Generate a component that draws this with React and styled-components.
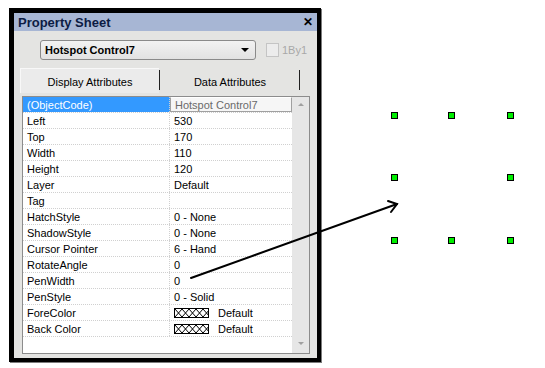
import React from 'react'
import styled, { createGlobalStyle } from 'styled-components'

const rows = [
  ['(ObjectCode)', 'Hotspot Control7'],
  ['Left', '530'],
  ['Top', '170'],
  ['Width', '110'],
  ['Height', '120'],
  ['Layer', 'Default'],
  ['Tag', ''],
  ['HatchStyle', '0 - None'],
  ['ShadowStyle', '0 - None'],
  ['Cursor Pointer', '6 - Hand'],
  ['RotateAngle', '0'],
  ['PenWidth', '0'],
  ['PenStyle', '0 - Solid'],
  ['ForeColor', 'Default', true],
  ['Back Color', 'Default', true],
]

const handles = [
  [394, 115], [451, 115], [510, 115],
  [394, 177], [510, 177],
  [394, 240], [451, 240], [510, 240],
]

function Swatch() {
  return (
    <svg width="35" height="10" viewBox="0 0 35 10">
      <rect x="0.5" y="0.5" width="34" height="9" fill="#fff" stroke="#000" />
      {[0, 1, 2, 3, 4].map(i => (
        <g key={i} stroke="#000" strokeWidth="1">
          <line x1={1 + i * 7} y1="1" x2={8 + i * 7} y2="9" />
          <line x1={8 + i * 7} y1="1" x2={1 + i * 7} y2="9" />
        </g>
      ))}
    </svg>
  )
}

function App() {
  return (
    <>
      <GlobalStyle />
      <Stage>
        <Window>
          <TitleBar>
            <span>Property Sheet</span>
            <Close>✕</Close>
          </TitleBar>
          <Toolbar>
            <Combo>
              <span>Hotspot Control7</span>
              <ComboArrow />
            </Combo>
            <Check />
            <CheckLabel>1By1</CheckLabel>
          </Toolbar>
          <Tabs>
            <Tab $active>Display Attributes</Tab>
            <TabSep />
            <Tab>Data Attributes</Tab>
            <TabSep />
          </Tabs>
          <Grid>
            <Rows>
              {rows.map(([name, value, swatch], i) => (
                <Row key={name}>
                  <NameCell $selected={i === 0}>{name}</NameCell>
                  <ValueCell $editing={i === 0}>
                    {swatch && <Swatch />}
                    {value}
                  </ValueCell>
                </Row>
              ))}
            </Rows>
            <ScrollBar>
              <ScrollArrow $dir="up" />
              <ScrollArrow $dir="down" />
            </ScrollBar>
          </Grid>
        </Window>

        {handles.map(([x, y], i) => (
          <Handle key={i} style={{ left: x - 3, top: y - 3 }} />
        ))}

        <Overlay width="545" height="368" viewBox="0 0 545 368">
          <g stroke="#000" strokeWidth="2" fill="none" strokeLinecap="round">
            <line x1="191" y1="278" x2="397" y2="204" />
            <polyline points="388,201 397,204 391,212" />
          </g>
        </Overlay>
      </Stage>
    </>
  )
}

const GlobalStyle = createGlobalStyle`
  html, body {
    margin: 0;
    padding: 0;
    background: #fff;
  }
  body {
    font-family: "Liberation Sans", Arial, sans-serif;
    font-size: 11px;
    color: #000;
  }
`

const Stage = styled.div`
  position: relative;
  width: 545px;
  height: 368px;
  overflow: hidden;
  padding: 8px 0 0 9px;
  box-sizing: border-box;
`

const Window = styled.div`
  width: 312px;
  height: 354px;
  box-sizing: border-box;
  border-style: solid;
  border-color: #000;
  border-width: 5px 4px 4px 5px;
  box-shadow: 1px 1px 0 #7c7c7c;
  background: #e4e4e2;
  display: flex;
  flex-direction: column;
`

const TitleBar = styled.div`
  height: 18px;
  display: flex;
  align-items: center;
  justify-content: space-between;
  padding: 0 4px;
  background: #a7b6d4;
  color: #0c1c44;
  font-size: 13px;
  font-weight: bold;
`

const Close = styled.span`
  font-size: 12px;
  color: #000;
`

const Toolbar = styled.div`
  display: flex;
  align-items: center;
  margin: 9px 0 0 26px;
  height: 20px;
`

const Combo = styled.div`
  width: 216px;
  height: 20px;
  box-sizing: border-box;
  border: 1px solid #8a8a8a;
  border-radius: 3px;
  background: linear-gradient(#f2f2f2, #e2e2e2);
  display: flex;
  align-items: center;
  justify-content: space-between;
  padding: 0 6px 0 4px;
  font-weight: bold;
  font-size: 11px;
`

const ComboArrow = styled.span`
  width: 0;
  height: 0;
  border-left: 4px solid transparent;
  border-right: 4px solid transparent;
  border-top: 4px solid #000;
`

const Check = styled.span`
  width: 11px;
  height: 12px;
  margin-left: 10px;
  border: 1px solid #c4c4c4;
  background: #ececec;
`

const CheckLabel = styled.span`
  margin-left: 3px;
  color: #a8a8a8;
  font-size: 11px;
`

const Tabs = styled.div`
  display: flex;
  align-items: stretch;
  margin: 8px 0 0 6px;
  height: 25px;
`

const Tab = styled.div`
  width: 139px;
  display: flex;
  align-items: center;
  justify-content: center;
  padding-top: 2px;
  box-sizing: border-box;
  background: ${p => (p.$active ? '#ebebeb' : 'transparent')};
  border-top: 1px solid ${p => (p.$active ? '#f8f8f8' : 'transparent')};
  border-left: 1px solid ${p => (p.$active ? '#f8f8f8' : 'transparent')};
  font-size: 11px;
`

const TabSep = styled.div`
  width: 1px;
  margin: 2px 0 3px;
  background: #202020;
`

const Grid = styled.div`
  display: flex;
  margin: 3px 0 0 8px;
  width: 288px;
  height: 258px;
  box-sizing: border-box;
  border: 1px solid #8c8c8c;
  background: #fff;
`

const Rows = styled.div`
  width: 269px;
  display: flex;
  flex-direction: column;
`

const Row = styled.div`
  display: flex;
  height: 16px;
  box-sizing: border-box;
  border-bottom: 1px dotted #d0d0d0;
`

const NameCell = styled.div`
  width: 147px;
  box-sizing: border-box;
  padding-left: 4px;
  display: flex;
  align-items: center;
  border-right: 1px dotted #d0d0d0;
  background: ${p => (p.$selected ? '#3399ff' : 'transparent')};
  color: ${p => (p.$selected ? '#fff' : '#000')};
  font-size: 11px;
`

const ValueCell = styled.div`
  flex: 1;
  box-sizing: border-box;
  padding-left: 4px;
  display: flex;
  align-items: center;
  gap: 9px;
  font-size: 11px;
  color: ${p => (p.$editing ? '#6a6a6a' : '#000')};
  border: ${p => (p.$editing ? '1px solid #a0a0a0' : 'none')};
  border-top-color: #ffffff;
  background: ${p => (p.$editing ? '#f6f6f6' : 'transparent')};
`

const ScrollBar = styled.div`
  width: 17px;
  display: flex;
  flex-direction: column;
  justify-content: space-between;
  align-items: center;
  padding: 6px 0 8px;
  box-sizing: border-box;
  background: #e6e6e6;
`

const ScrollArrow = styled.span`
  width: 0;
  height: 0;
  border-left: 3px solid transparent;
  border-right: 3px solid transparent;
  ${p => (p.$dir === 'up' ? 'border-bottom: 3px solid #a0a0a0;' : 'border-top: 3px solid #a0a0a0;')}
`

const Handle = styled.div`
  position: absolute;
  width: 7px;
  height: 7px;
  box-sizing: border-box;
  border: 1px solid #000;
  background: #00ee00;
`

const Overlay = styled.svg`
  position: absolute;
  left: 0;
  top: 0;
  pointer-events: none;
`

export default App
